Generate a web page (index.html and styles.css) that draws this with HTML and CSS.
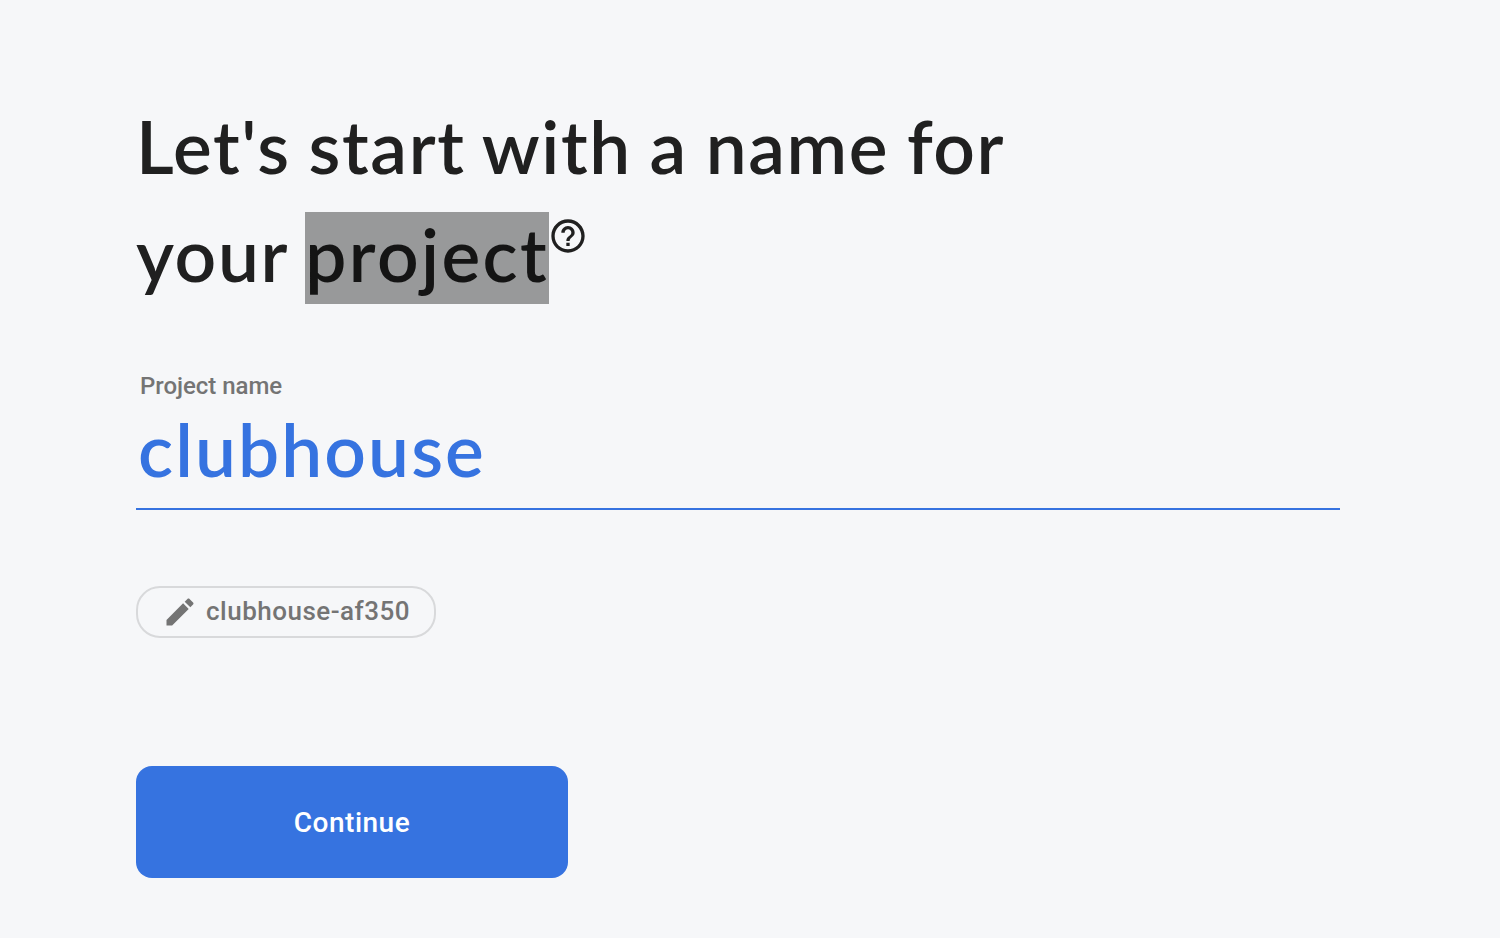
FILE: index.html
```html
<!DOCTYPE html>
<html lang="en">
<head>
  <meta charset="UTF-8">
  <title>Create a project</title>
  <link rel="stylesheet" href="styles.css">
</head>
<body>

  <form class="create-project">
    <h1 class="title">
      <span class="title-line">Let's start with a name for</span>
      <span class="title-line">your <mark class="term">project</mark><svg class="help-icon" viewBox="0 0 24 24"><path d="M11 18h2v-2h-2v2zm1-16C6.48 2 2 6.48 2 12s4.48 10 10 10 10-4.48 10-10S17.52 2 12 2zm0 18c-4.41 0-8-3.59-8-8s3.59-8 8-8 8 3.59 8 8-3.59 8-8 8zm0-14c-2.21 0-4 1.79-4 4h2c0-1.1.9-2 2-2s2 .9 2 2c0 2-3 1.75-3 5h2c0-2.25 3-2.5 3-5 0-2.21-1.79-4-4-4z"/></svg></span>
    </h1>

    <label class="field-label" for="project-name">Project name</label>
    <input class="field-input" id="project-name" type="text" value="clubhouse" spellcheck="false">

    <button class="project-id" type="button">
      <svg class="edit-icon" viewBox="0 0 24 24"><path d="M3 17.25V21h3.75L17.81 9.94l-3.75-3.75L3 17.25zM20.71 7.04c.39-.39.39-1.02 0-1.41l-2.34-2.34c-.39-.39-1.02-.39-1.41 0l-1.83 1.83 3.75 3.75 1.83-1.83z"/></svg>
      <span class="project-id-text">clubhouse-af350</span>
    </button>

    <button class="continue" type="button">Continue</button>
  </form>

</body>
</html>
```

FILE: styles.css
```css
* {
  box-sizing: border-box;
}
body {
  margin: 0;
  height: 100vh;
  overflow: hidden;
  background: #f6f7f9;
  font-family: Roboto, sans-serif;
}
.create-project {
  display: flex;
  flex-direction: column;
  align-items: flex-start;
  width: 1204px;
  margin-left: 136px;
  padding-top: 92px;
}
.title {
  margin: 0;
  font-family: Lato, sans-serif;
  font-size: 73px;
  font-weight: 600;
  line-height: 108px;
  letter-spacing: 1.6px;
  word-spacing: -2px;
  color: #202020;
}
.title-line {
  display: flex;
  height: 108px;
  white-space: pre;
}
.term {
  height: 92px;
  margin-top: 12px;
  line-height: 84px;
  letter-spacing: 2.4px;
  background: #98999a;
  color: #141414;
}
.help-icon {
  width: 40px;
  height: 40px;
  margin: 16px 0 0 -1px;
  fill: #202020;
}
.field-label {
  margin: 64px 0 0 4px;
  font-size: 24px;
  font-weight: 500;
  line-height: 28px;
  letter-spacing: -0.03px;
  color: #747474;
}
.field-input {
  width: 100%;
  height: 110px;
  padding: 0 0 10px 2px;
  border: 0;
  border-bottom: 2px solid #3673e0;
  background: none;
  font-family: Lato, sans-serif;
  font-size: 73px;
  font-weight: 600;
  letter-spacing: 2.1px;
  color: #3673e0;
  outline: 0;
}
.project-id {
  display: flex;
  align-items: center;
  width: 300px;
  height: 52px;
  margin-top: 76px;
  padding: 0 0 0 24px;
  border: 2px solid #d8d9db;
  border-radius: 24px;
  background: none;
  color: #747474;
}
.edit-icon {
  width: 36px;
  height: 36px;
  margin-right: 8px;
  fill: currentColor;
}
.project-id-text {
  padding-bottom: 2px;
  font-family: Roboto, sans-serif;
  font-size: 26px;
  font-weight: 500;
  letter-spacing: 0.5px;
}
.continue {
  width: 432px;
  height: 112px;
  margin-top: 128px;
  border: 0;
  border-radius: 16px;
  background: #3673e0;
  font-family: Roboto, sans-serif;
  font-size: 28px;
  font-weight: 500;
  letter-spacing: 0.5px;
  color: #fff;
}
```
